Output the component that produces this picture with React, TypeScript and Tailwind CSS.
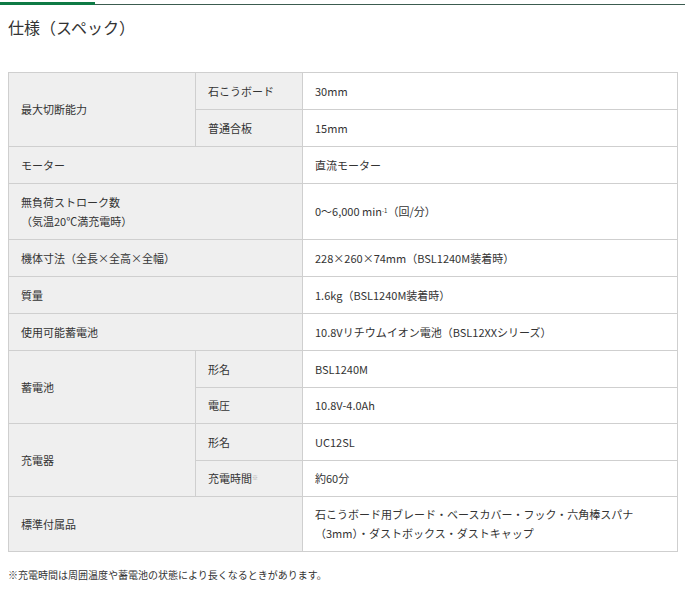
import React from "react";

const th = "bg-[#efefef] border border-[#cfcfcf] px-3 text-left font-normal align-middle";
const td = "bg-white border border-[#cfcfcf] px-3 align-middle";

export default function App() {
  return (
    <div className="w-[685px] h-[589px] bg-white text-[#333] text-[11px]" style={{ fontFamily: '"Noto Sans CJK JP", "Noto Sans", sans-serif' }}>
      <div className="pt-[2px] flex items-end">
        <div className="w-[95px] h-[3px] bg-[#0e7a45]"></div>
        <div className="flex-1 h-px bg-[#3c5c50]"></div>
      </div>
      <h2 className="ml-2 mt-[10px] text-[16px] leading-[24px] text-[#333]">仕様（スペック）</h2>
      <table className="ml-2 mt-[33px] w-[670px] border-collapse">
        <colgroup><col className="w-[187px]" /><col className="w-[107px]" /><col /></colgroup>
        <tbody>
          <tr className="h-[37px]"><th rowSpan={2} className={th}>最大切断能力</th><th className={th}>石こうボード</th><td className={td}>30mm</td></tr>
          <tr className="h-[37px]"><th className={th}>普通合板</th><td className={td}>15mm</td></tr>
          <tr className="h-[37px]"><th colSpan={2} className={th}>モーター</th><td className={td}>直流モーター</td></tr>
          <tr className="h-[56px]"><th colSpan={2} className={th + " leading-[19px]"}>無負荷ストローク数<br />（気温20℃満充電時）</th><td className={td}>0～6,000 min<sup className="text-[6px]">-1</sup>（回/分）</td></tr>
          <tr className="h-[37px]"><th colSpan={2} className={th}>機体寸法（全長×全高×全幅）</th><td className={td}>228×260×74mm（BSL1240M装着時）</td></tr>
          <tr className="h-[37px]"><th colSpan={2} className={th}>質量</th><td className={td}>1.6kg（BSL1240M装着時）</td></tr>
          <tr className="h-[37px]"><th colSpan={2} className={th}>使用可能蓄電池</th><td className={td}>10.8Vリチウムイオン電池（BSL12XXシリーズ）</td></tr>
          <tr className="h-[37px]"><th rowSpan={2} className={th}>蓄電池</th><th className={th}>形名</th><td className={td}>BSL1240M</td></tr>
          <tr className="h-[36px]"><th className={th}>電圧</th><td className={td}>10.8V-4.0Ah</td></tr>
          <tr className="h-[37px]"><th rowSpan={2} className={th}>充電器</th><th className={th}>形名</th><td className={td}>UC12SL</td></tr>
          <tr className="h-[36px]"><th className={th}>充電時間<sup className="text-[6px] text-[#aaa]">※</sup></th><td className={td}>約60分</td></tr>
          <tr className="h-[55px]"><th colSpan={2} className={th}>標準付属品</th><td className={td + " leading-[19px]"}>石こうボード用ブレード・ベースカバー・フック・六角棒スパナ<br />（3mm）・ダストボックス・ダストキャップ</td></tr>
        </tbody>
      </table>
      <p className="ml-2 mt-[15px] text-[10px]">※充電時間は周囲温度や蓄電池の状態により長くなるときがあります。</p>
    </div>
  );
}
